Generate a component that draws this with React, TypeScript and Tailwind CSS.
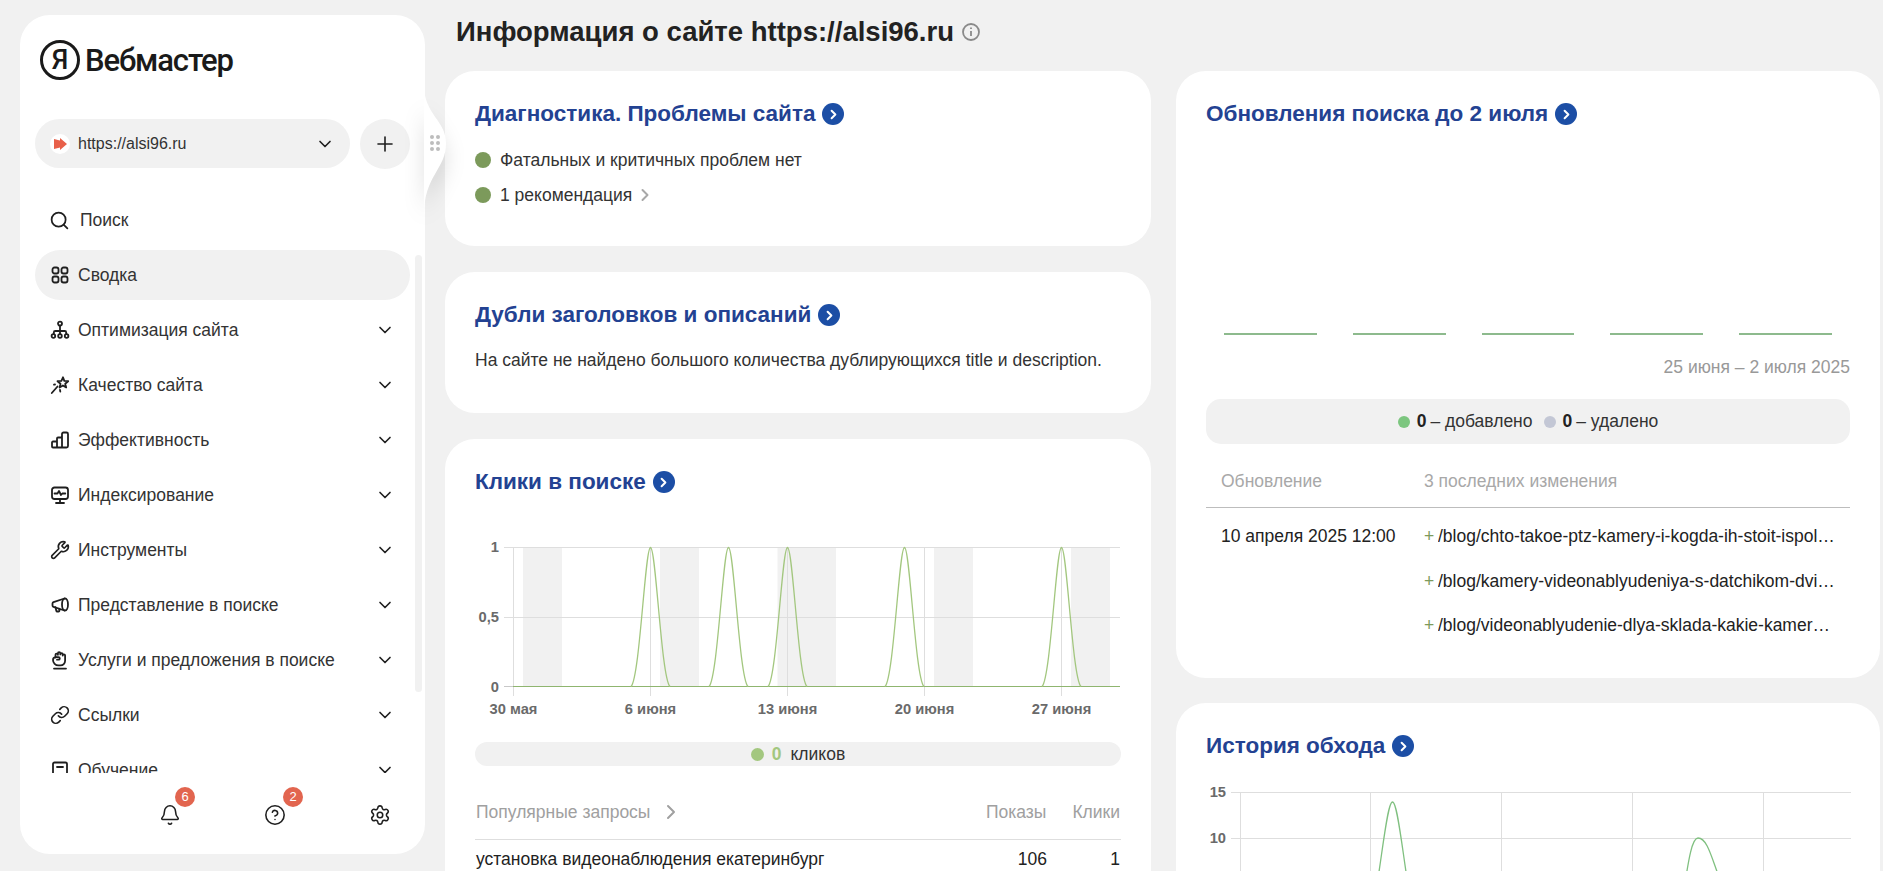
import { Bell, ChevronDown, ChevronRight, CircleHelp, Link, Plus, Search, Settings, Wrench } from "lucide-react";
import type { ReactNode } from "react";

const font = "font-['Liberation_Sans',Arial,sans-serif]";

// --- Sidebar icons -----------------------------------------------------------

function Glyph({ children }: { children: ReactNode }) {
  return (
    <svg viewBox="0 0 20 20" fill="none" stroke="#1f1f1f" strokeWidth={1.8} strokeLinecap="round" strokeLinejoin="round" className="h-5 w-5 shrink-0">
      {children}
    </svg>
  );
}

const SummaryIcon = () => (
  <Glyph>
    <rect x="2.5" y="2.5" width="6" height="6" rx="2" />
    <rect x="11.5" y="2.5" width="6" height="6" rx="2" />
    <rect x="2.5" y="11.5" width="6" height="6" rx="2" />
    <rect x="11.5" y="11.5" width="6" height="6" rx="2" />
  </Glyph>
);

const SitemapIcon = () => (
  <Glyph>
    <circle cx="10" cy="3.6" r="2" />
    <path d="M10 5.6V11M3.8 14v-1.5a1.5 1.5 0 0 1 1.5-1.5h9.4a1.5 1.5 0 0 1 1.5 1.5V14M10 11v3" />
    <circle cx="3.4" cy="16" r="1.8" />
    <circle cx="10" cy="16" r="1.8" />
    <circle cx="16.6" cy="16" r="1.8" />
  </Glyph>
);

const QualityIcon = () => (
  <Glyph>
    <path d="M11.5 1.8l1.3 3.6 3.9.3-3 2.5 1 3.8-3.3-2-3.3 2 .9-3.8-3-2.5 3.9-.3z" transform="translate(1.5 .5)" />
    <path d="M7.5 11.5L1.8 18" />
    <path d="M5 9.5l-1 .2M10 15l.3 1.6" />
  </Glyph>
);

const BarsIcon = () => (
  <Glyph>
    <path d="M2 12.5a1 1 0 0 1 1-1h4v6H3a1 1 0 0 1-1-1zM7 8.5a1 1 0 0 1 1-1h3a1 1 0 0 1 1 1v9H7zM12 4a1.5 1.5 0 0 1 1.5-1.5h3A1.5 1.5 0 0 1 18 4v12a1.5 1.5 0 0 1-1.5 1.5H12z" />
  </Glyph>
);

const MonitorIcon = () => (
  <Glyph>
    <rect x="2" y="2.5" width="16" height="11.5" rx="2.5" />
    <path d="M4.5 8.5h3l1.5-2.5 2 4 1.3-1.5h3M10 14v4M6 18h8" />
  </Glyph>
);

const MegaphoneIcon = () => (
  <Glyph>
    <path d="M14.5 3.5L3.5 7.2a1.5 1.5 0 0 0-1 1.4v1.8a1.5 1.5 0 0 0 1 1.4l11 3.7" />
    <ellipse cx="15" cy="9.5" rx="3" ry="6" />
    <path d="M5.5 12.2l.8 3.5a1 1 0 0 0 1 .8h1.2a1 1 0 0 0 1-1.2l-.5-1.7" />
  </Glyph>
);

const HandIcon = () => (
  <Glyph>
    <path d="M5.5 7.5V4.8a1.2 1.2 0 0 1 2.4 0V3.4a1.2 1.2 0 0 1 2.4 0v1a1.2 1.2 0 0 1 2.4 0v1.2a1.2 1.2 0 0 1 2.4 0v5.2a4.6 4.6 0 0 1-4.6 4.6H8.500a5.500 5.500 0 0 1-5.500-5.500c0-1.800 1.200-2.800 3-2.800h2.500a1.300 1.300 0 0 1 0 2.600H7" />
    <path d="M4 18.600h12" />
  </Glyph>
);

const BookIcon = () => (
  <Glyph>
    <rect x="3" y="2.500" width="14" height="15" rx="1.500" />
    <path d="M7 7h6" />
  </Glyph>
);

const iconProps = { size: 20, strokeWidth: 2, color: "#1f1f1f", className: "shrink-0" };

const menu: { label: string; icon: ReactNode; chevron?: boolean; active?: boolean }[] = [
  { label: "Сводка", icon: <SummaryIcon />, active: true },
  { label: "Оптимизация сайта", icon: <SitemapIcon />, chevron: true },
  { label: "Качество сайта", icon: <QualityIcon />, chevron: true },
  { label: "Эффективность", icon: <BarsIcon />, chevron: true },
  { label: "Индексирование", icon: <MonitorIcon />, chevron: true },
  { label: "Инструменты", icon: <Wrench {...iconProps} />, chevron: true },
  { label: "Представление в поиске", icon: <MegaphoneIcon />, chevron: true },
  { label: "Услуги и предложения в поиске", icon: <HandIcon />, chevron: true },
  { label: "Ссылки", icon: <Link {...iconProps} />, chevron: true },
  { label: "Обучение", icon: <BookIcon />, chevron: true },
];

function Sidebar() {
  return (
    <aside className="relative mt-[15px] ml-[20px] h-[839px] w-[405px] shrink-0 rounded-[30px] bg-white pt-[25px]">
      <div className="flex h-[40px] items-center gap-[5px] pl-[20px]">
        <div className="flex h-[40px] w-[40px] items-center justify-center rounded-full border-[3.500px] border-[#1a1a1a] font-['Roboto',sans-serif] text-[27px] font-medium leading-none text-[#1a1a1a]">
          Я
        </div>
        <span className="font-['Roboto',sans-serif] text-[31px] font-medium leading-none tracking-[-1.1px] text-[#1a1a1a]">Вебмастер</span>
      </div>

      <div className="mt-[39px] flex gap-[10px] px-[15px]">
        <div className="flex h-[49px] w-[315px] items-center rounded-full bg-[#f1f1f1] pr-[15px] pl-[15px]">
          <span className="flex h-[20px] w-[20px] items-center justify-center rounded-full bg-white">
            <svg viewBox="0 0 16 16" className="h-[16px] w-[16px]">
              <path d="M2 3l6 1.500V2l7 6-7 6v-2.500L2 13z" fill="#e8604a" />
            </svg>
          </span>
          <span className="ml-[8px] flex-1 text-[16px] text-[#333]">https://alsi96.ru</span>
          <ChevronDown {...iconProps} />
        </div>
        <div className="flex h-[50px] w-[50px] items-center justify-center rounded-full bg-[#f1f1f1]">
          <Plus size={24} strokeWidth={1.6} color="#1f1f1f" />
        </div>
      </div>

      <nav className="mt-[26px] flex h-[578px] flex-col gap-[5px] overflow-hidden px-[15px]">
        <div className="flex h-[50px] shrink-0 items-center gap-[8px] pl-[14px] text-[17.500px] text-[#333]">
          <Search {...iconProps} size={21} />
          <span className="ml-[2px]">Поиск</span>
        </div>
        {menu.map((item) => (
          <div
            key={item.label}
            className={`flex h-[50px] shrink-0 items-center gap-[8px] rounded-full pr-[15px] pl-[15px] text-[17.500px] text-[#333] ${item.active ? "bg-[#f1f1f1]" : ""}`}
          >
            {item.icon}
            <span className="flex-1">{item.label}</span>
            {item.chevron && <ChevronDown {...iconProps} />}
          </div>
        ))}
      </nav>

      <div className="mt-[31px] flex justify-end gap-[83px] pr-[34px]">
        <div className="relative h-[22px] w-[22px]">
          <Bell size={22} strokeWidth={1.7} color="#1f1f1f" />
          <span className="absolute -top-[17px] left-[16px] flex h-[20px] w-[20px] items-center justify-center rounded-full bg-[#e2654f] text-[13px] text-white">6</span>
        </div>
        <div className="relative h-[22px] w-[22px]">
          <CircleHelp size={22} strokeWidth={1.7} color="#1f1f1f" />
          <span className="absolute -top-[17px] left-[19px] flex h-[20px] w-[20px] items-center justify-center rounded-full bg-[#e2654f] text-[13px] text-white">2</span>
        </div>
        <div className="h-[22px] w-[22px]">
          <Settings size={22} strokeWidth={1.7} color="#1f1f1f" />
        </div>
      </div>

      {/* scrollbar thumb over the menu */}
      <div className="absolute top-[240px] left-[395px] h-[437px] w-[7px] rounded-full bg-[#f1f1f1]" />

      {/* drag handle bulge */}
      <svg viewBox="0 0 24 130" className="absolute top-[70px] left-[404px] z-10 h-[130px] w-[24px] overflow-visible drop-shadow-[0_14px_10px_rgba(0,0,0,0.12)]">
        <path d="M0 0C0 30 22 35 22 58C22 85 0 90 0 130Z" fill="#fff" />
      </svg>
      <div className="absolute top-[120px] left-[410px] z-20 grid grid-cols-[4px_4px] gap-[2px]">
        {Array.from({ length: 6 }).map((_, i) => (
          <span key={i} className="h-[4px] w-[4px] rounded-full bg-[#bdbdbd]" />
        ))}
      </div>
    </aside>
  );
}

// --- Cards -------------------------------------------------------------------

function CardTitle({ children }: { children: string }) {
  return (
    <div className="flex h-[26px] items-center gap-[7px] text-[22.500px] font-bold text-[#234292]">
      <span>{children}</span>
      <span className="flex h-[22px] w-[22px] items-center justify-center rounded-full bg-[#1c4ea5]">
        <ChevronRight size={15} strokeWidth={3.2} color="#fff" />
      </span>
    </div>
  );
}

function bell(c: number, top: number, base: number, w = 19.5) {
  const h = base - top;
  return `M${c - w} ${base}C${c - w * 0.55} ${base - h * 0.06} ${c - w * 0.28} ${top} ${c} ${top}C${c + w * 0.28} ${top} ${c + w * 0.55} ${base - h * 0.06} ${c + w} ${base}`;
}

const ticks = [
  { x: 513.5, label: "30 мая" },
  { x: 650.5, label: "6 июня" },
  { x: 787.5, label: "13 июня" },
  { x: 924.5, label: "20 июня" },
  { x: 1061.5, label: "27 июня" },
];

function ClicksChart() {
  return (
    <svg viewBox="445 520 706 220" className="mt-[25px] -mx-[30px] block h-[220px] w-[706px] max-w-none font-['Liberation_Sans',sans-serif]">
      {[[523, 562], [660, 699], [777.5, 836], [934, 973], [1071, 1110]].map(([a, b]) => (
        <rect key={a} x={a} y={547} width={b - a} height={140} fill="#f1f1f1" />
      ))}
      {[547, 617].map((y) => (
        <line key={y} x1={504} x2={1120} y1={y + 0.5} y2={y + 0.5} stroke="#dedede" />
      ))}
      {ticks.map((t) => (
        <line key={t.x} x1={t.x} x2={t.x} y1={547} y2={696} stroke="#dedede" />
      ))}
      <line x1={504} x2={1120} y1={686.5} y2={686.5} stroke="#c8c8c8" />
      <line x1={513} x2={1120} y1={686.5} y2={686.5} stroke="#8fb56f" />
      {[650.5, 728.5, 787.5, 904.5, 1061.5].map((c) => (
        <path key={c} d={bell(c, 547.5, 686.5)} fill="none" stroke="#a3c77f" strokeWidth={1.3} />
      ))}
      {ticks.map((t) => (
        <text key={t.label} x={t.x} y={714} textAnchor="middle" fontSize={14.7} fontWeight={700} fill="#6a6a6a">
          {t.label}
        </text>
      ))}
      {[["1", 552], ["0,5", 622], ["0", 692]].map(([label, y]) => (
        <text key={label} x={499} y={y} textAnchor="end" fontSize={14.7} fontWeight={700} fill="#6a6a6a">
          {label}
        </text>
      ))}
    </svg>
  );
}

function CrawlChart() {
  return (
    <svg viewBox="1176 780 704 200" className="mt-[21px] -mx-[30px] block h-[200px] w-[704px] max-w-none font-['Liberation_Sans',sans-serif]">
      {[792, 838, 884].map((y) => (
        <line key={y} x1={1231} x2={1851} y1={y + 0.5} y2={y + 0.5} stroke="#dedede" />
      ))}
      {[1240.5, 1370.5, 1501.5, 1632.5, 1763.5].map((x) => (
        <line key={x} x1={x} x2={x} y1={792} y2={940} stroke="#dedede" />
      ))}
      <path d={bell(1392.5, 802, 930, 28)} fill="none" stroke="#80c080" strokeWidth={1.3} />
      <path d="M1676 930C1685 900 1688 838 1698 838C1708 838 1712 860 1722 885C1730 905 1735 925 1745 930" fill="none" stroke="#80c080" strokeWidth={1.3} />
      {[["15", 797], ["10", 843]].map(([label, y]) => (
        <text key={label} x={1226} y={y} textAnchor="end" fontSize={14.7} fontWeight={700} fill="#6a6a6a">
          {label}
        </text>
      ))}
    </svg>
  );
}

const paths = [
  "/blog/chto-takoe-ptz-kamery-i-kogda-ih-stoit-ispolzovat",
  "/blog/kamery-videonablyudeniya-s-datchikom-dvizheniya",
  "/blog/videonablyudenie-dlya-sklada-kakie-kamery-vybrat",
];

function LeftColumn() {
  return (
    <div className="flex w-[706px] shrink-0 flex-col gap-[26px]">
      <section className="rounded-[30px] bg-white px-[30px] pt-[30px] pb-[39px]">
        <CardTitle>Диагностика. Проблемы сайта</CardTitle>
        <div className="mt-[21px] flex h-[24px] items-center gap-[9px] text-[17.500px] text-[#333]">
          <span className="h-[16px] w-[16px] rounded-full bg-[#7c9a5b]" />
          Фатальных и критичных проблем нет
        </div>
        <div className="mt-[11px] flex h-[24px] items-center gap-[9px] text-[17.500px] text-[#333]">
          <span className="h-[16px] w-[16px] rounded-full bg-[#7c9a5b]" />
          1 рекомендация
          <ChevronRight size={20} strokeWidth={2.4} color="#a8a8a8" className="-ml-[6px]" />
        </div>
      </section>

      <section className="rounded-[30px] bg-white px-[30px] pt-[30px] pb-[41px]">
        <CardTitle>Дубли заголовков и описаний</CardTitle>
        <p className="mt-[20px] text-[17.500px] leading-[24px] text-[#333]">На сайте не найдено большого количества дублирующихся title и description.</p>
      </section>

      <section className="rounded-[30px] bg-white px-[30px] pt-[30px] pb-[40px]">
        <CardTitle>Клики в поиске</CardTitle>
        <ClicksChart />
        <div className="mt-[2px] flex h-[24px] items-center justify-center rounded-full bg-[#f1f1f1] text-[17.500px] text-[#333]">
          <span className="h-[13px] w-[13px] rounded-full bg-[#a3c77f]" />
          <span className="ml-[8px] font-bold text-[#a3c77f]">0</span>
          <span className="ml-[9px]">кликов</span>
        </div>
        <div className="mt-[34px] flex h-[40px] items-start border-b border-[#dedede] pl-[1px] text-[17.500px] leading-[24px] text-[#a0a0a0]">
          <span>Популярные запросы</span>
          <ChevronRight size={24} strokeWidth={2} color="#a0a0a0" className="ml-[9px]" />
          <span className="ml-auto">Показы</span>
          <span className="ml-[26px] pr-[1px]">Клики</span>
        </div>
        <div className="mt-[7px] flex h-[24px] items-center pl-[1px] text-[17.500px] text-[#222]">
          <span className="flex-1">установка видеонаблюдения екатеринбург</span>
          <span>106</span>
          <span className="w-[74px] pr-[1px] text-right">1</span>
        </div>
      </section>
    </div>
  );
}

function RightColumn() {
  return (
    <div className="flex w-[704px] shrink-0 flex-col gap-[25px]">
      <section className="rounded-[30px] bg-white px-[30px] pt-[30px] pb-[41px]">
        <CardTitle>Обновления поиска до 2 июля</CardTitle>
        <div className="mt-[206px] flex gap-[36px] px-[18px]">
          {Array.from({ length: 5 }).map((_, i) => (
            <span key={i} className="h-[2px] w-[93px] bg-[#8dba8d]" />
          ))}
        </div>
        <div className="mt-[20px] text-right text-[17.500px] leading-[24px] text-[#999]">25 июня – 2 июля 2025</div>
        <div className="mt-[20px] flex h-[45px] items-center justify-center rounded-[15px] bg-[#f1f1f1] text-[17.500px] text-[#333]">
          <span className="h-[12px] w-[12px] rounded-full bg-[#7cc67f]" />
          <span className="ml-[7px] font-bold text-[#222]">0</span>
          <span className="ml-[4px]">– добавлено</span>
          <span className="ml-[11px] h-[12px] w-[12px] rounded-full bg-[#c3c7d5]" />
          <span className="ml-[7px] font-bold text-[#222]">0</span>
          <span className="ml-[4px]">– удалено</span>
        </div>
        <div className="mt-[25px] flex h-[39px] items-start border-b border-[#bdbdbd] pl-[15px] text-[17.500px] leading-[24px] text-[#a8a8a8]">
          <span className="w-[203px]">Обновление</span>
          <span>3 последних изменения</span>
        </div>
        <div className="mt-[16px] flex pl-[15px] text-[17.500px] leading-[24px] text-[#222]">
          <span className="w-[203px] shrink-0">10 апреля 2025 12:00</span>
          <div className="flex flex-col gap-[20.500px]">
            {paths.map((p) => (
              <div key={p} className="flex">
                <span className="w-[14px] shrink-0 text-[#7c9a5b]">+</span>
                <span className="w-[400px] truncate">{p}</span>
              </div>
            ))}
          </div>
        </div>
      </section>

      <section className="rounded-[30px] bg-white px-[30px] pt-[30px] pb-[40px]">
        <CardTitle>История обхода</CardTitle>
        <CrawlChart />
      </section>
    </div>
  );
}

export default function App() {
  return (
    <div className={`${font} flex h-[871px] w-[1883px] overflow-hidden bg-[#f1f1f1]`}>
      <Sidebar />
      <main className="ml-[20px] flex min-w-0 flex-col">
        <div className="mb-[7px] flex h-[64px] shrink-0 items-center gap-[7px] pl-[11px]">
          <h1 className="text-[27.500px] font-bold text-[#222]">Информация о сайте https://alsi96.ru</h1>
          <svg viewBox="0 0 20 20" fill="none" stroke="#8a8a8a" strokeWidth={1.8} className="h-[20px] w-[20px]">
            <circle cx="10" cy="10" r="8" />
            <path d="M10 9v5M10 5.500v1.500" />
          </svg>
        </div>
        <div className="flex shrink-0 items-start gap-[25px]">
          <LeftColumn />
          <RightColumn />
        </div>
      </main>
    </div>
  );
}
